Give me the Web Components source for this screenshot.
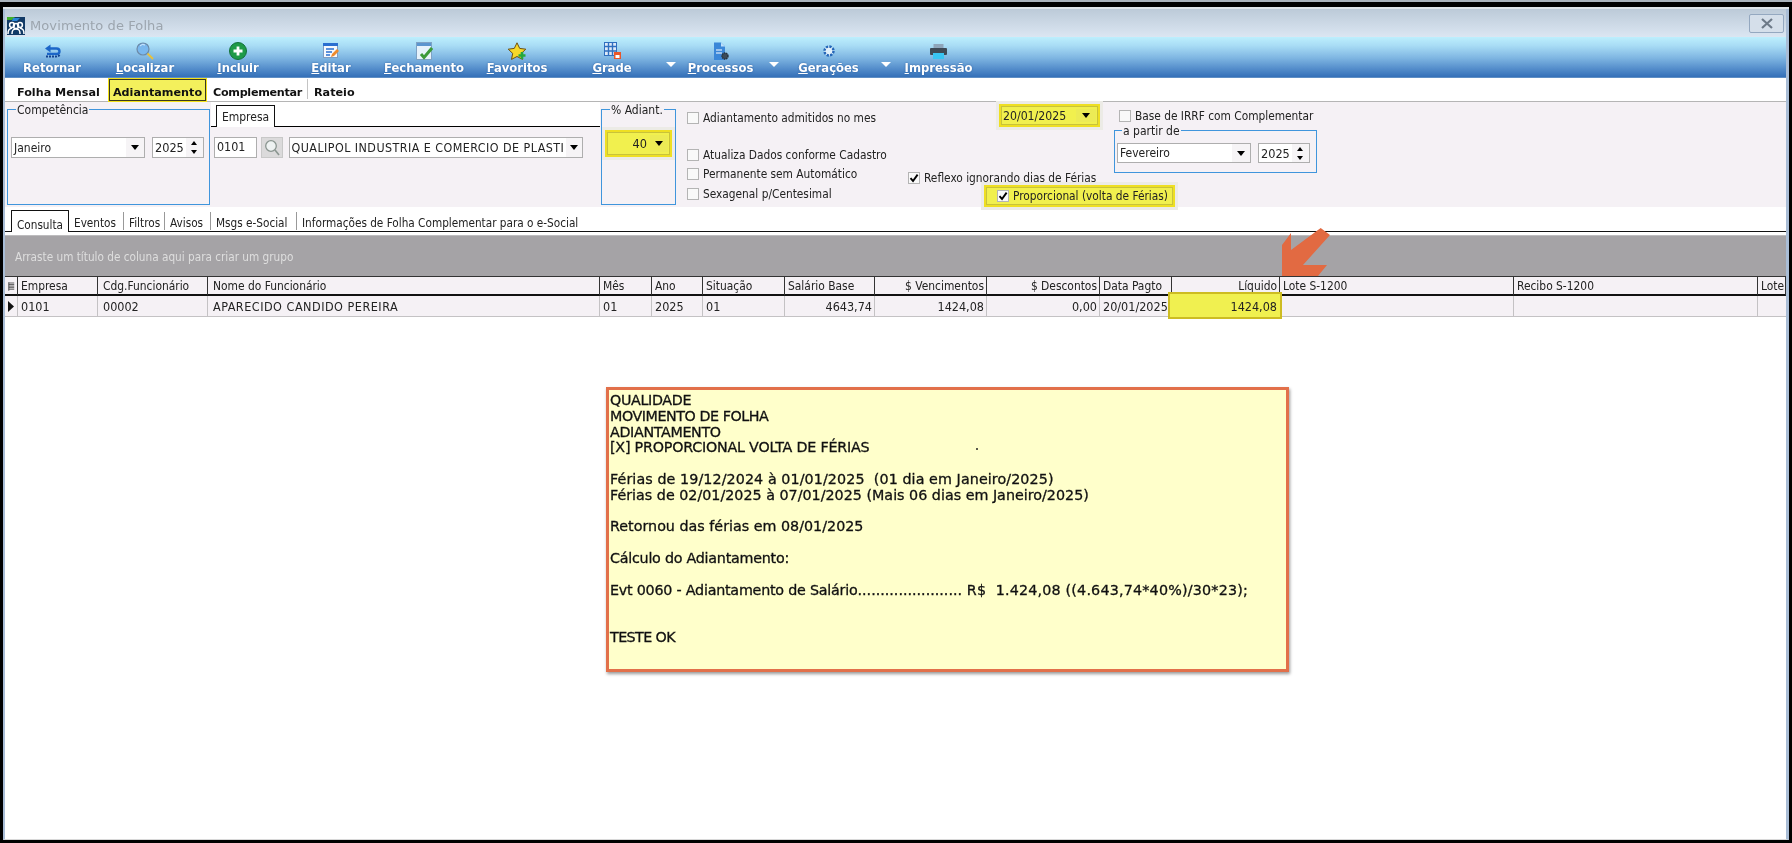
<!DOCTYPE html>
<html lang="pt-BR"><head><meta charset="utf-8"><title>Movimento de Folha</title>
<style>
html,body{margin:0;padding:0;background:#000;height:843px;overflow:hidden}
body{font-family:"DejaVu Sans",sans-serif;font-stretch:condensed;font-size:11.7px;color:#222}
</style></head><body>
<template id="t-group"><style>
:host{display:block;box-sizing:border-box;position:relative;border:1px solid #3f95dc;flex:none}
.l{position:absolute;top:-8px;left:var(--ll,8px);background:#f5f1f5;padding:0 1px;line-height:16px;white-space:nowrap;font-size:12px}
.c{display:flex;gap:var(--g,7px);padding:var(--p,27px 0 0 3px)}
</style><div class="l"><slot name="legend"></slot></div><div class="c"><slot></slot></div></template>

<template id="t-combo"><style>
:host{display:flex;box-sizing:border-box;flex:none;height:21px;border:1px solid #aeaeae;background:#fff;align-items:center;width:var(--w,100px)}
.t{flex:1;padding:0 2px;white-space:nowrap;overflow:hidden;font-size:var(--fs,12px);letter-spacing:var(--ls,0)}
.a{width:var(--aw,17px);align-self:stretch;background:var(--ab,#f6f4f6);display:flex;align-items:center;justify-content:center}
.a i{width:0;height:0;border:4px solid transparent;border-top:5px solid #000;border-bottom:0}
</style><div class="t" part="t"><slot></slot></div><div class="a"><i></i></div></template>

<template id="t-spin"><style>
:host{display:flex;box-sizing:border-box;flex:none;height:21px;border:1px solid #aeaeae;background:#fff;align-items:center;width:var(--w,52px)}
.t{flex:1;padding:0 2px;font-size:12.6px}
.a{width:18px;align-self:stretch;background:#f6f4f6;display:flex;flex-direction:column;align-items:center;justify-content:center;gap:5px}
.u,.d{width:0;height:0;border:3px solid transparent}
.u{border-bottom:4px solid #000;border-top:0}.d{border-top:4px solid #000;border-bottom:0}
</style><div class="t"><slot></slot></div><div class="a"><i class="u"></i><i class="d"></i></div></template>

<template id="t-check"><style>
:host{display:flex;align-items:center;gap:4px;white-space:nowrap;flex:none;height:14px;font-size:11.8px}
.b{box-sizing:border-box;width:12px;height:12px;border:1px solid #b4b4b4;background:#f9f9f9;flex:none;display:block}
svg{display:block;width:10px;height:10px}
</style><span class="b"></span><span><slot></slot></span></template>

<template id="t-tool"><style>
:host{display:flex;flex-direction:column;align-items:center;flex:none;width:var(--w,93px);height:40px;box-sizing:border-box;padding-top:4px;color:#fff;font:bold 11.6px "DejaVu Sans",sans-serif;font-stretch:normal;text-shadow:0 0 2px #2c5f9f}
.i{height:20px;display:flex;align-items:center;justify-content:center}
.l{line-height:15px;white-space:nowrap}
</style><div class="i"><slot name="icon"></slot></div><div class="l"><slot></slot></div></template>

<template id="t-caret"><style>
:host{display:flex;flex:none;width:12px;justify-content:center;padding-top:25px;box-sizing:border-box;height:40px}
i{display:block;width:0;height:0;border:5px solid transparent;border-top:5px solid #fff;border-bottom:0}
</style><i></i></template>

<template id="t-note"><style>
:host{display:block;box-sizing:border-box;position:relative;width:683px;height:285px;margin:70px 0 0 601px;border:3px solid #e2704a;background:#ffffcb;box-shadow:1px 2px 3px #9a9a9a;padding:3px 0 0 1px}
.x{white-space:pre;font:14.3px/15.8px "DejaVu Sans",sans-serif;font-stretch:normal;color:#111;-webkit-text-stroke:.3px #111}
.dot{position:absolute;left:367px;top:58px;width:2px;height:2px;background:#222;border-radius:50%}
</style><div class="x"><slot></slot></div><span class="dot"></span></template>

<x-app></x-app>
<script>
function S(el,id){const r=el.attachShadow({mode:'open'});r.appendChild(document.getElementById(id).content.cloneNode(true));return r}
class XGroup extends HTMLElement{constructor(){super();S(this,'t-group')}}
class XCombo extends HTMLElement{constructor(){super();S(this,'t-combo')}}
class XSpin extends HTMLElement{constructor(){super();S(this,'t-spin')}}
class XCheck extends HTMLElement{constructor(){super();const r=S(this,'t-check');if(this.hasAttribute('checked'))r.querySelector('.b').innerHTML='<svg viewBox="0 0 10 10"><path d="M1.5 5.2 4 8 8.6 1.6" fill="none" stroke="#000" stroke-width="1.9"/></svg>'}}
class XTool extends HTMLElement{constructor(){super();S(this,'t-tool')}}
class XCaret extends HTMLElement{constructor(){super();S(this,'t-caret')}}
class XNote extends HTMLElement{constructor(){super();S(this,'t-note')}}

class XTitlebar extends HTMLElement{constructor(){super();this.attachShadow({mode:'open'}).innerHTML=`<style>
:host{display:flex;align-items:center;height:28px;box-sizing:border-box;background:linear-gradient(#bccad8,#dbe6f2);padding:5px 2px 0 2px;color:#9ca5ae;font:13px "DejaVu Sans",sans-serif}
svg.a{width:18px;height:18px;flex:none;margin-right:5px}
.t{flex:1;letter-spacing:.1px}
.c{box-sizing:border-box;width:35px;height:19px;border:1px solid #94a8c0;border-radius:2px;background:#d5dfea;display:flex;align-items:center;justify-content:center;margin:-4px 0 0}
</style>
<svg class="a" viewBox="0 0 18 18"><rect width="18" height="18" fill="#123a66"/><path d="M0 0h8L5 3H0z" fill="#3fae2a"/><path d="M6 1h7l-3 3H5z" fill="#2b86d6"/><g fill="none" stroke="#fff" stroke-width="1.5"><circle cx="5" cy="8" r="2.4"/><circle cx="13" cy="8" r="2.4"/><circle cx="9" cy="9" r="2.6"/><path d="M1 17c0-4 1-5 4-6M17 17c0-4-1-5-4-6M5 17c0-4 1-5 4-5s4 1 4 5"/></g></svg>
<div class="t">Movimento de Folha</div>
<div class="c"><svg width="12" height="11" viewBox="0 0 12 11"><path d="M1 1l10 9M11 1 1 10" stroke="#6d7a88" stroke-width="2.2" fill="none"/></svg></div>`}}

class XToolbar extends HTMLElement{constructor(){super();this.attachShadow({mode:'open'}).innerHTML=`<style>
:host{display:flex;height:40px;background:linear-gradient(#bdeffd 0,#a8dcf5 22%,#7fb6e2 52%,#568fcc 78%,#3470b8 100%);border-bottom:1px solid #5f8ec4;padding-left:.5px}
</style><slot></slot>`}}

class XMenu extends HTMLElement{constructor(){super();this.attachShadow({mode:'open'}).innerHTML=`<style>
:host{display:flex;height:24px;box-sizing:border-box;background:#fff;border-bottom:1px solid #b5b5b5;font:bold 11.2px/30px "DejaVu Sans",sans-serif;font-stretch:normal;color:#111}
div{flex:none;white-space:nowrap;box-sizing:border-box}
.a{width:103px;padding-left:12px}
.b{width:99px;height:24px;background:#f3f05c;border:1px solid #f3e21a;box-shadow:inset 0 0 0 1px #3a3a20;text-align:center;line-height:28px}
.c{width:101px;padding-left:6px;border-right:1px solid #c4c4c4;height:20px;line-height:28px;margin-top:1px;letter-spacing:-.3px}
.d{padding-left:6px}
</style><div class="a">Folha Mensal</div><div class="b">Adiantamento</div><div class="c">Complementar</div><div class="d">Rateio</div>`}}

class XEmpresa extends HTMLElement{constructor(){super();this.attachShadow({mode:'open'}).innerHTML=`<style>
:host{display:block;flex:none;width:389px;margin-left:1px}
.h{height:24px;background:#fff;border-bottom:1px solid #000;position:relative;padding-left:5px;display:flex;align-items:flex-end}
.tab{box-sizing:border-box;width:59px;height:22px;border:1px solid #111;border-bottom:0;background:#fff;text-align:center;line-height:23px;margin-bottom:-1px;font-size:12px}
.r{display:flex;padding:10px 0 0 3px;align-items:flex-start}
.code{box-sizing:border-box;width:43px;height:21px;border:1px solid #aeaeae;background:#fff;padding-left:2px;line-height:18px;font-size:12.4px;flex:none}
.s{box-sizing:border-box;width:22px;height:21px;margin:0 5.5px 0 4px;border:1px solid #c8c8c8;background:#dbdadb;display:flex;align-items:center;justify-content:center;flex:none}
x-combo{--w:294px;--aw:16px;--fs:12.4px;--ls:.45px}
</style><div class="h"><div class="tab">Empresa</div></div>
<div class="r"><div class="code">0101</div><div class="s"><svg width="16" height="17" viewBox="0 0 16 17"><circle cx="7" cy="7" r="5.3" fill="#eef2f2" stroke="#8a9590" stroke-width="1.3"/><path d="M11 11l4 5" stroke="#8a9590" stroke-width="1.6"/></svg></div><x-combo>QUALIPOL INDUSTRIA E COMERCIO DE PLASTI</x-combo></div>`}}

class XYellow extends HTMLElement{constructor(){super();this.attachShadow({mode:'open'}).innerHTML=`<style>
:host{display:block;box-sizing:border-box;flex:none;background:#f1f04e;border:2px solid #eedf22;box-shadow:0 0 0 3px #ecebe6;outline:1px solid #c9c33a;outline-offset:-3px}
</style><slot></slot>`}}

class XPanel extends HTMLElement{constructor(){super();this.attachShadow({mode:'open'}).innerHTML=`<style>
:host{display:flex;height:105px;background:#f5f1f5;align-items:flex-start;overflow:visible}
</style><slot></slot>`}}

class XSubtabs extends HTMLElement{constructor(){super();this.attachShadow({mode:'open'}).innerHTML=`<style>
:host{display:flex;height:25px;box-sizing:border-box;background:#fff;border-bottom:1px solid #111;align-items:flex-end;font-size:11.7px;white-space:nowrap;padding-left:6px}
div{flex:none;box-sizing:border-box;height:18px;line-height:22px;padding-left:5px;border-right:1px solid #999;margin-bottom:1px}
.on{width:58px;height:22px;line-height:28px;border:1px solid #111;border-bottom:0;text-align:center;padding:0;background:#fff;margin-bottom:-1px;border-radius:1px 1px 0 0}
.l{border:0}
</style><div class="on">Consulta</div><div style="width:55px">Eventos</div><div style="width:41px">Filtros</div><div style="width:46px">Avisos</div><div style="width:86px">Msgs e-Social</div><div class="l">Informações de Folha Complementar para o e-Social</div>`}}

class XGroupbar extends HTMLElement{constructor(){super();this.attachShadow({mode:'open'}).innerHTML=`<style>
:host{display:block;margin-top:3px;height:41px;background:#a5a3a6;color:#dedede;font-size:11.7px;line-height:43px;padding-left:10px;border-top:1px solid #bdbcbe;box-sizing:border-box}
</style><slot></slot>`}}

class XDatagrid extends HTMLElement{constructor(){super();
const w=[13,80,110,392,52,51,82,90,112,113,72,108,234,244,28];
const heads=[['',0],['Empresa',0],['Cdg.Funcionário',0],['Nome do Funcionário',0],['Mês',0],['Ano',0],['Situação',0],['Salário Base',0],['$ Vencimentos',1],['$ Descontos',1],['Data Pagto',0],['Líquido',1],['Lote S-1200',0],['Recibo S-1200',0],['Lote',0]];
const row=[['',0],['0101',0],['00002',0],['APARECIDO CANDIDO PEREIRA',0],['01',0],['2025',0],['01',0],['4643,74',1],['1424,08',1],['0,00',1],['20/01/2025',0],['1424,08',1],['',0],['',0],['',0]];
const cell=(c,i,cl)=>`<div class="${cl}${c[1]?' r':''}${cl=='d'&&i==11?' hi':''}${cl=='d'&&i==3?' caps':''}${i==2||i==3?' pl':''}">${i==0?(cl=='h'?'<svg width="9" height="11" viewBox="0 0 9 11"><path d="M1 1h7M1 3h7M1 5h7M1 7h7M1 9h7" stroke="#333" stroke-width="1"/><path d="M1 0v11" stroke="#333"/></svg>':'<svg width="6" height="11" viewBox="0 0 6 11"><path d="M0 0l6 5.5L0 11z" fill="#111"/></svg>'):c[0]}</div>`;
this.attachShadow({mode:'open'}).innerHTML=`<style>
:host{display:grid;grid-template-columns:${w.map(x=>x+'px').join(' ')};grid-template-rows:20px 21px;background:#f5f1f5;font-size:11.9px;white-space:nowrap}
div{box-sizing:border-box;padding:0 2px 0 3px;overflow:hidden;display:flex;align-items:center}
.pl{padding-left:5px}
.r{justify-content:flex-end}
.h{border-top:1px solid #333;border-bottom:2px solid #111;border-right:1px solid #333;padding-top:1px}
.d{border-bottom:1.5px solid #c4c2c4;border-right:1.5px solid #c4c2c4;font-size:12.5px}
.caps{letter-spacing:.5px}
.h:last-child,.d:last-child{border-right:0}
.hi{background:#f0f050;outline:2px solid #cdbc22;outline-offset:-1px;margin:-3px -1px 0 -3px;position:relative;height:25px;padding-right:4px;border:0;padding-top:1px}
div:first-child,.d:nth-child(16){padding:0 0 0 3px}
</style>${heads.map((c,i)=>cell(c,i,'h')).join('')}${row.map((c,i)=>cell(c,i,'d')).join('')}`}}

class XApp extends HTMLElement{constructor(){super();this.attachShadow({mode:'open'}).innerHTML=`<style>
:host{display:block;height:843px;width:1792px;position:relative;overflow:hidden;background:#000}
.strip{height:2px;background:#aab3bc}
.gap{height:5px}
.strip2{height:2px;background:#dfe5ea;margin:0 3px}
.win{box-sizing:border-box;margin:0 3px;height:831px;border-left:2px solid #a9bdd6;border-right:3px solid #a9bdd6;background:#fff;border-bottom:1px solid #d8d8d8;filter:blur(.35px);position:relative}
u{text-decoration:underline}
x-group.comp{margin:7px 0 0 2px;width:203px;height:96px}
x-group.adi{margin:7px 0 0 1px;width:75px;height:96px;--p:20px 0 0 3px}
x-group.part{width:203px;height:43px;margin:7px 0 0 0;--p:12px 0 0 2px;--ll:7px}
.col{display:flex;flex-direction:column;flex:none}
.checks{width:221px;margin-left:11px;margin-top:9px}
.mid{width:400px;flex:none}
.top{display:flex;height:70px}
.ca{width:206px;flex:none;padding:2px 0 0 91px;box-sizing:border-box}
.cb{width:205px;flex:none}
.date{width:101px;height:23px;display:flex;align-items:center;font-size:12.2px;padding-left:2px;box-sizing:border-box}
.date span{flex:1}.date b{width:20px;align-self:stretch;margin:3px 2px 3px 0;background:#eceb55;display:flex;align-items:center;justify-content:center}
i.ar{width:0;height:0;border:4px solid transparent;border-top:5px solid #000;border-bottom:0;display:block}
.ye40{width:67px;height:27px;display:flex;align-items:center;justify-content:flex-end;font-size:12.6px}
.ye40 b{width:18px;align-self:stretch;margin:3px 2px 3px 3px;background:#eceb55;display:flex;align-items:center;justify-content:center;font-weight:400}
.prop{margin:1px 0 0 76px;width:191px;height:22px;display:flex;align-items:center;padding-left:11px}
svg.arrow{position:absolute;left:1278px;top:224px;width:56px;height:56px;z-index:5}
</style>
<div class="strip"></div><div class="gap"></div><div class="strip2"></div>
<div class="win">
<x-titlebar></x-titlebar>
<x-toolbar>
<x-tool><svg slot="icon" width="17" height="14" viewBox="0 0 17 14"><path d="M6 4.500h6.500c2 0 3 1 3 2.700s-1 2.700-3 2.700H3" fill="none" stroke="#1c66c8" stroke-width="2.400"/><path d="M1 4.500 6.500.5v8z" fill="#1c66c8"/><path d="M2 12.500h10c2 0 3.500-1 4-2.500" stroke="#12418f" stroke-width="1.800" fill="none" stroke-dasharray="2 1"/></svg>Retornar</x-tool>
<x-tool><svg slot="icon" width="18" height="18" viewBox="0 0 18 18"><circle cx="7" cy="7" r="6" fill="#7ab8ee" stroke="#6c8aa8" stroke-width="1.200"/><path d="M4 4a4 4 0 0 1 5-1" stroke="#d6ecff" fill="none"/><path d="M11.500 11.500 17 17" stroke="#e8c23c" stroke-width="2"/></svg><u>L</u>ocalizar</x-tool>
<x-tool><svg slot="icon" width="18" height="18" viewBox="0 0 18 18"><circle cx="9" cy="9" r="8.500" fill="#1f9a48" stroke="#12713a"/><path d="M9 4.500v9M4.500 9h9" stroke="#fff" stroke-width="2.800"/></svg><u>I</u>ncluir</x-tool>
<x-tool><svg slot="icon" width="16" height="16" viewBox="0 0 16 16"><rect x=".5" y=".5" width="14" height="14" fill="#f6f9fd" stroke="#7f9cc0"/><rect y="0" width="15" height="3" fill="#2a6fd0"/><path d="M3 6h8M3 9h6M3 12h4" stroke="#2a6fd0" stroke-width="1.500"/><path d="M8 14l1-3 5-5 2 2-5 5z" fill="#ee8a2c"/></svg><u>E</u>ditar</x-tool>
<x-tool><svg slot="icon" width="17" height="19" viewBox="0 0 17 19"><rect x=".5" y=".5" width="15" height="17" fill="#e6f2fb" stroke="#7fa2c4"/><rect x="1" y="1" width="14" height="3" fill="#5b95cf"/><path d="M5 12l3 3.500L16 6" fill="none" stroke="#3c9a3a" stroke-width="3"/></svg><u>F</u>echamento</x-tool>
<x-tool><svg slot="icon" width="20" height="18" viewBox="0 0 20 18"><path d="M10 .8l2.700 5.600 6.100.8-4.500 4.200 1.200 6L10 14.500 4.500 17.400l1.200-6L1.200 7.200l6.100-.8z" fill="#f7d928" stroke="#6d4f12"/><path d="M15 10v7M11.500 13.500h7" stroke="#25a83c" stroke-width="2.600"/></svg><u>F</u>avoritos</x-tool>
<x-tool style="--w:97px"><svg slot="icon" width="17" height="18" viewBox="0 0 17 18"><rect x=".5" y=".5" width="12" height="13" fill="#dfeaf8" stroke="#2f6fbf"/><path d="M4.500 1v12M8.500 1v12M1 4.500h11M1 9h11" stroke="#2f6fbf" stroke-width="1.400"/><rect x="10" y="10" width="7" height="7" fill="#e8562a"/><rect x="11.500" y="13" width="4" height="3" fill="#fff"/></svg><u>G</u>rade</x-tool>
<x-caret style="margin-left:4px"></x-caret>
<x-tool style="--w:88px"><svg slot="icon" width="16" height="19" viewBox="0 0 16 19"><path d="M1 .5h7l4 4V18H1z" fill="#3b87d8"/><path d="M8 .5l4 4H8z" fill="#bfe0fa"/><path d="M3 8h6M3 11h6" stroke="#fff" stroke-width="1.200"/><circle cx="12" cy="14" r="3" fill="#3c4a58" stroke="#26323d" stroke-width="1.400" stroke-dasharray="1.500 .6"/></svg><u>P</u>rocessos</x-tool>
<x-caret style="margin-left:3px"></x-caret>
<x-tool style="--w:96px;margin-left:1px"><svg slot="icon" width="14" height="14" viewBox="0 0 14 14"><circle cx="7" cy="7" r="4.500" fill="#e8f2fb" stroke="#2566b8" stroke-width="2.400" stroke-dasharray="2.300 1.200"/><circle cx="7" cy="7" r="2.300" fill="#dff0fb"/></svg><u>G</u>erações</x-tool>
<x-caret style="margin-left:3px"></x-caret>
<x-tool style="--w:94px"><svg slot="icon" width="17" height="15" viewBox="0 0 17 15"><rect x="3.500" y="0" width="10" height="5" fill="#8fa6bb"/><rect x="0" y="4" width="17" height="7" rx="1" fill="#3e4a56"/><rect x="3" y="9" width="11" height="6" fill="#39c4f2"/></svg><u>I</u>mpressão</x-tool>
</x-toolbar>
<x-menu></x-menu>
<x-panel>
<x-group class="comp"><span slot="legend">Competência</span><x-combo style="--w:134px;--aw:18px">Janeiro</x-combo><x-spin>2025</x-spin></x-group>
<x-empresa></x-empresa>
<x-group class="adi"><span slot="legend">% Adiant.</span><x-yellow class="ye40">40<b><i class="ar"></i></b></x-yellow></x-group>
<div class="col checks">
<x-check>Adiantamento admitidos no mes</x-check>
<x-check style="margin-top:23px">Atualiza Dados conforme Cadastro</x-check>
<x-check style="margin-top:5px">Permanente sem Automático</x-check>
<x-check style="margin-top:6px">Sexagenal p/Centesimal</x-check>
</div>
<div class="mid">
<div class="top">
<div class="ca"><x-yellow class="date"><span>20/01/2025</span><b><i class="ar"></i></b></x-yellow></div>
<div class="cb">
<x-check style="margin:7px 0 0 5px">Base de IRRF com Complementar</x-check>
<x-group class="part"><span slot="legend">a partir de</span><x-combo style="--w:134px;--aw:18px;height:20px">Fevereiro</x-combo><x-spin style="height:20px">2025</x-spin></x-group>
</div>
</div>
<x-check checked style="height:12px">Reflexo ignorando dias de Férias</x-check>
<x-yellow class="prop"><x-check checked>Proporcional (volta de Férias)</x-check></x-yellow>
</div>
</x-panel>
<x-subtabs></x-subtabs>
<x-groupbar>Arraste um título de coluna aqui para criar um grupo</x-groupbar>
<x-datagrid></x-datagrid>
<x-note><span style="letter-spacing:-.35px">QUALIDADE</span>
<span style="letter-spacing:-.45px">MOVIMENTO DE FOLHA</span>
<span style="letter-spacing:-.35px">ADIANTAMENTO</span>
<span style="letter-spacing:-.22px">[X] PROPORCIONAL VOLTA DE FÉRIAS</span>

<span style="letter-spacing:.08px">Férias de 19/12/2024 à 01/01/2025  (01 dia em Janeiro/2025)</span>
Férias de 02/01/2025 à 07/01/2025 (Mais 06 dias em Janeiro/2025)

Retornou das férias em 08/01/2025

<span style="letter-spacing:-.25px">Cálculo do Adiantamento:</span>

<span style="letter-spacing:-.23px">Evt 0060 - Adiantamento de Salário</span>.......................<span style="letter-spacing:.19px"> R$  1.424,08 ((4.643,74*40%)/30*23);</span>


<span style="letter-spacing:-.6px">TESTE OK</span></x-note>
</div>
<svg class="arrow" viewBox="1278 224 56 56"><path d="M1282 276V245L1291 233V250L1320.700 228 1330 235 1303 265H1327L1318 276Z" fill="#e26a42"/></svg>`;
}}
[['x-group',XGroup],['x-combo',XCombo],['x-spin',XSpin],['x-check',XCheck],['x-tool',XTool],['x-caret',XCaret],['x-note',XNote],['x-titlebar',XTitlebar],['x-toolbar',XToolbar],['x-menu',XMenu],['x-empresa',XEmpresa],['x-yellow',XYellow],['x-panel',XPanel],['x-subtabs',XSubtabs],['x-groupbar',XGroupbar],['x-datagrid',XDatagrid],['x-app',XApp]].forEach(([n,c])=>customElements.define(n,c));
</script></body></html>
